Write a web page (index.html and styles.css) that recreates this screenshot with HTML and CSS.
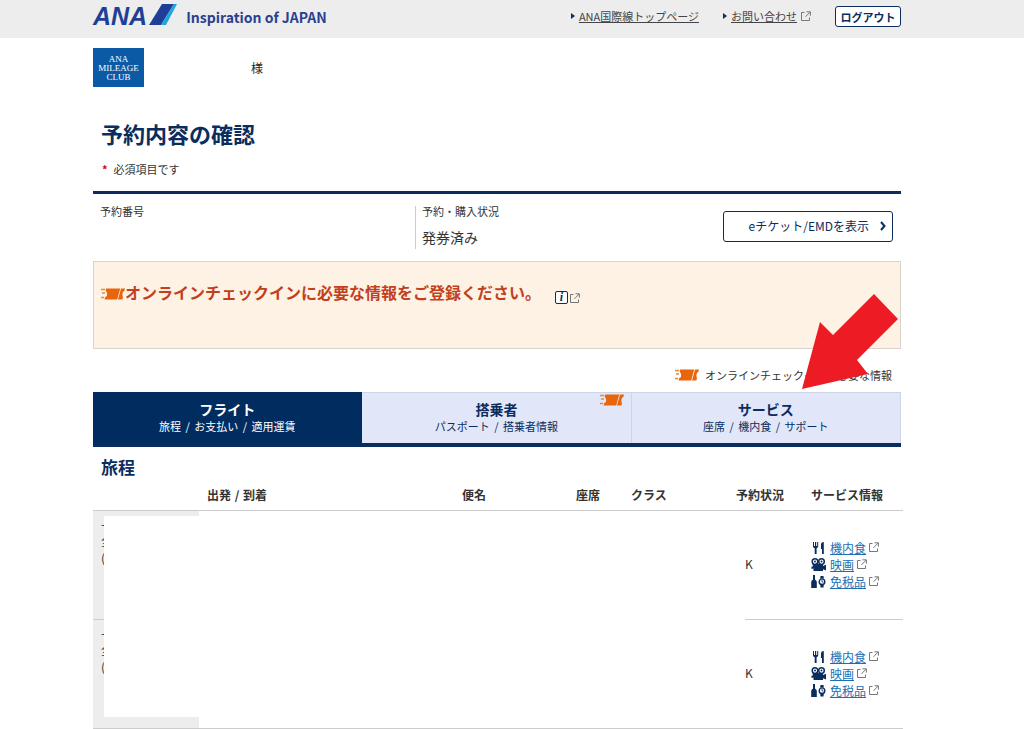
FILE: index.html
```
<!DOCTYPE html>
<html lang="ja">
<head>
<meta charset="utf-8">
<title>予約内容の確認</title>
<link rel="stylesheet" href="styles.css">
</head>
<body>
<svg class="defs" aria-hidden="true">
  <symbol id="ext" viewBox="0 0 10 10">
    <path d="M3.500 1.500H.5v8h8V6.500M5.500 .8h3.900v3.900M9.200 1L4.500 5.800" fill="none" stroke="#777" stroke-width="1"/>
  </symbol>
  <symbol id="ticket" viewBox="0 0 24 12">
    <path d="M0 1.500h4M1 5h3M0 9.500h3" stroke="#e9883c" stroke-width="1.300" fill="none"/>
    <path d="M5 .5H19.200L16.200 11.500H3.500L4.200 9Q6.300 8.800 6.200 6.200Q6 4 4.700 3ZM20 .5H24L23.300 3Q21.600 3.600 21.400 6Q21.300 8.300 22 9L21.400 11.500H17Z" fill="#e8650c"/>
  </symbol>
  <symbol id="meal" viewBox="0 0 15 13">
    <path d="M2 1h1v4h1V1h1.200v4h1V1h1v4.500Q7 6.800 5.600 7.200V13H3.700V7.200Q2 6.800 2 5.500ZM10 8V3Q10.300 1 12.800 1V13H11V8Z" fill="#0b2d5e"/>
  </symbol>
  <symbol id="movie" viewBox="0 0 15 13">
    <path d="M1.500 6H12v2L15 6.800v5.700L12 11.300V13H2.500V10.500L.5 11V8.500H2Z" fill="#0b2d5e"/>
    <circle cx="4" cy="3.600" r="2.800" fill="#fff" stroke="#0b2d5e" stroke-width="1.500"/>
    <circle cx="10.500" cy="3.600" r="2.800" fill="#fff" stroke="#0b2d5e" stroke-width="1.500"/>
    <circle cx="4" cy="3.600" r="1" fill="#0b2d5e"/>
    <circle cx="10.500" cy="3.600" r="1" fill="#0b2d5e"/>
  </symbol>
  <symbol id="duty" viewBox="0 0 15 13">
    <path d="M2 0H4V4.500Q5.800 5.500 5.800 7V13H.2V7Q.2 5.500 2 4.500ZM9.500 1h3l.3 2.500h-3.600ZM9.500 12.500h3l.3-3h-3.600Z" fill="#0b2d5e"/>
    <circle cx="11" cy="6.700" r="2.800" fill="#fff" stroke="#0b2d5e" stroke-width="1.400"/>
    <path d="M11 5v2h1.400" fill="none" stroke="#0b2d5e" stroke-width=".8"/>
  </symbol>
</svg>

<header class="site-header">
  <div class="wrap header-row">
    <a class="brand" href="#">
      <span class="brand-name">ANA</span>
      <svg class="brand-mark" viewBox="0 0 28 21" aria-hidden="true">
        <path d="M13 0H25L12 21H0Z" fill="#1f3f96"/>
        <path d="M25 0H28L17 21H12Z" fill="#1fa5e0"/>
      </svg>
      <span class="brand-tag">Inspiration of JAPAN</span>
    </a>
    <nav class="header-nav">
      <span class="nav-item"><a href="#">ANA国際線トップページ</a></span>
      <span class="nav-item"><a href="#">お問い合わせ</a><svg class="ext"><use href="#ext"/></svg></span>
      <button class="logout" type="button">ログアウト</button>
    </nav>
  </div>
</header>

<main class="wrap">
  <div class="member">
    <div class="club">ANA<br>MILEAGE<br>CLUB</div>
    <span class="honorific">様</span>
  </div>

  <h1>予約内容の確認</h1>
  <p class="required"><span class="star">*</span>必須項目です</p>

  <section class="summary">
    <div class="summary-cell">
      <span class="label">予約番号</span>
    </div>
    <div class="summary-cell status">
      <span class="label">予約・購入状況</span>
      <span class="value">発券済み</span>
    </div>
    <button class="eticket" type="button">eチケット/EMDを表示
      <svg class="chevron" viewBox="0 0 6 10" aria-hidden="true"><path d="M1 1l3.500 4L1 9" fill="none" stroke="#0b2d5e" stroke-width="2"/></svg>
    </button>
  </section>

  <section class="notice">
    <svg class="ticket"><use href="#ticket"/></svg>
    <strong>オンラインチェックインに必要な情報をご登録ください。</strong>
    <a class="info" href="#" aria-label="詳細"><span class="info-mark">i</span><svg class="ext"><use href="#ext"/></svg></a>
  </section>

  <div class="legend">
    <svg class="ticket"><use href="#ticket"/></svg>
    <span>オンラインチェックインに必要な情報</span>
    <svg class="arrow" viewBox="0 0 97 96" aria-hidden="true"><path d="M0 95L18 28L31 41L72 0L96 25L55 66L66 80Z" fill="#ed1c24"/></svg>
  </div>

  <nav class="tabs">
    <button class="tab active" type="button"><b>フライト</b><span>旅程 <i>/</i> お支払い <i>/</i> 適用運賃</span></button>
    <button class="tab" type="button"><b>搭乗者</b><span>パスポート <i>/</i> 搭乗者情報</span><svg class="ticket"><use href="#ticket"/></svg></button>
    <button class="tab" type="button"><b>サービス</b><span>座席 <i>/</i> 機内食 <i>/</i> サポート</span></button>
  </nav>

  <h2>旅程</h2>
  <div class="itinerary">
    <table>
      <colgroup><col class="c-date"><col class="c-route"><col class="c-flight"><col class="c-seat"><col class="c-class"><col class="c-state"><col></colgroup>
      <thead>
        <tr><th></th><th>出発 <i>/</i> 到着</th><th>便名</th><th>座席</th><th>クラス</th><th>予約状況</th><th>サービス情報</th></tr>
      </thead>
      <tbody>
        <tr>
          <td class="date">-<br>全<br>(</td><td></td><td></td><td></td><td></td><td class="state">K</td>
          <td>
            <ul class="services">
              <li><svg class="pic"><use href="#meal"/></svg><a href="#">機内食</a><svg class="ext"><use href="#ext"/></svg></li>
              <li><svg class="pic"><use href="#movie"/></svg><a href="#">映画</a><svg class="ext"><use href="#ext"/></svg></li>
              <li><svg class="pic"><use href="#duty"/></svg><a href="#">免税品</a><svg class="ext"><use href="#ext"/></svg></li>
            </ul>
          </td>
        </tr>
        <tr>
          <td class="date">-<br>全<br>(</td><td></td><td></td><td></td><td></td><td class="state">K</td>
          <td>
            <ul class="services">
              <li><svg class="pic"><use href="#meal"/></svg><a href="#">機内食</a><svg class="ext"><use href="#ext"/></svg></li>
              <li><svg class="pic"><use href="#movie"/></svg><a href="#">映画</a><svg class="ext"><use href="#ext"/></svg></li>
              <li><svg class="pic"><use href="#duty"/></svg><a href="#">免税品</a><svg class="ext"><use href="#ext"/></svg></li>
            </ul>
          </td>
        </tr>
      </tbody>
    </table>
    <div class="mask"></div>
  </div>
</main>
</body>
</html>
```
FILE: styles.css
```
* { box-sizing: border-box; }
body {
  margin: 0;
  background: #fff;
  color: #333;
  font: 12px/18px "Noto Sans CJK JP", sans-serif;
}
button { font: inherit; cursor: pointer; }
h1, h2, p, ul { margin: 0; padding: 0; }
i { margin: 0 2px; font-style: normal; }
.defs { display: none; }
.wrap { margin: 0 123px 0 93px; }
.ext { width: 10px; height: 10px; flex: none; }
.ticket { width: 24px; height: 12px; flex: none; }

.site-header { background: #ededed; }
.header-row { display: flex; justify-content: space-between; height: 38px; }
.brand { display: flex; align-items: flex-start; padding-top: 4px; color: #2b3f8f; text-decoration: none; }
.brand-name { font: italic bold 25px/25px "Liberation Sans", Arial, sans-serif; color: #1f3f96; }
.brand-mark { width: 28px; height: 21px; margin-left: 2px; }
.brand-tag { margin-left: 9px; font-size: 14px; line-height: 26px; font-weight: bold; }
.header-nav { display: flex; align-items: flex-start; gap: 24px; padding-top: 6px; font-size: 11px; line-height: 20px; }
.nav-item { display: flex; align-items: center; }
.nav-item::before { content: ""; border: 3px solid transparent; border-left: 4px solid #0b2d5e; border-right: 0; margin-right: 4px; }
.nav-item a { color: #444; }
.nav-item .ext { margin-left: 4px; }
.logout { width: 66px; height: 21px; padding: 0; border: 1px solid #0b2d5e; border-radius: 3px; background: #fff; color: #0b2d5e; font-weight: bold; line-height: 18px; }

.member { display: flex; align-items: center; gap: 107px; padding-top: 10px; }
.club { width: 51px; height: 39px; padding-top: 7px; background: #0b5aa6; color: #fff; font: 9px/9px "Liberation Serif", serif; text-align: center; }
.honorific { color: #222; }

h1 { margin-top: 30px; padding-left: 8px; color: #0b2d5e; font-size: 22px; line-height: 32px; }
.required { padding: 11px 0 13px 9px; font-size: 11px; }
.star { margin-right: 6px; color: #d0021b; font-weight: bold; }

.summary { display: flex; align-items: flex-start; padding: 12px 8px 12px 0; border-top: 3px solid #0b2d5e; }
.summary-cell { display: flex; flex: 1; flex-direction: column; height: 43px; padding-left: 7px; }
.summary-cell:first-child { flex: 0 0 322px; }
.status { padding-left: 6px; border-left: 1px solid #ccc; }
.label { font-size: 11px; line-height: 11px; }
.value { margin-top: 12px; font-size: 14px; line-height: 17px; }
.eticket { display: flex; align-items: center; justify-content: flex-end; gap: 11px; width: 170px; height: 31px; margin-top: 5px; padding: 0 6px 2px 0; border: 1px solid #0b2d5e; border-radius: 3px; background: #fff; color: #0b2d5e; }
.chevron { width: 6px; height: 10px; }

.notice { display: flex; align-items: flex-start; height: 88px; padding: 18px 7px; border: 1px solid #d8d3cb; background: #fef2e4; }
.notice strong { color: #c2401c; font-size: 16px; line-height: 24px; }
.notice .ticket { margin-top: 8px; }
.info { display: flex; align-items: center; gap: 2px; margin: 11px 0 0 14px; text-decoration: none; }
.info-mark { width: 13px; height: 13px; border: 1px solid #0b2d5e; border-radius: 2px; background: #fff; color: #0b2d5e; font: italic bold 12px/11px "Liberation Serif", serif; text-align: center; }

.legend { position: relative; display: flex; align-items: center; justify-content: flex-end; gap: 6px; padding: 17px 9px 8px; font-size: 11px; }
.arrow { position: absolute; right: 2px; bottom: 2px; width: 97px; height: 96px; z-index: 1; }

.tabs { display: flex; border-bottom: 4px solid #0b2d5e; }
.tab { position: relative; display: flex; flex: 1; flex-direction: column; align-items: center; height: 51px; padding: 7px 0 0; border: 1px solid #cdd4e6; border-width: 1px 1px 0 0; background: #e1e7f8; color: #0b2d5e; font-size: 11px; line-height: 16px; }
.tab b { font-size: 14px; line-height: 18px; }
.tab.active { background: #002c60; border-color: #002c60; color: #fff; }
.tab .ticket { position: absolute; top: 1px; right: 7px; }

h2 { padding: 8px 8px 5px; color: #0b2d5e; font-size: 17px; line-height: 24px; }
.itinerary { position: relative; margin-right: -2px; }
table { width: 100%; border-collapse: collapse; table-layout: fixed; }
.c-date { width: 106px; }
.c-route { width: 255px; }
.c-flight { width: 114px; }
.c-seat { width: 55px; }
.c-class { width: 105px; }
.c-state { width: 75px; }
th { height: 26px; padding: 0 0 4px 8px; border-bottom: 1px solid #ccc; text-align: left; line-height: 18px; white-space: nowrap; }
th i { margin: 0 1px; }
td { height: 109px; padding: 0 0 1px 8px; border-bottom: 1px solid #ccc; }
td.date { padding-top: 4px; background: #ededed; line-height: 17px; vertical-align: top; }
td.state { padding-left: 8px; }
.services { list-style: none; line-height: 17px; }
.services li { display: flex; align-items: center; }
.services a { margin: 0 3px 0 4px; color: #1a6fb5; }
.pic { width: 15px; height: 13px; }
.mask { position: absolute; top: 32px; right: 158px; bottom: 12px; left: 11px; background: #fff; }
td.state { padding-left: 17px; }
```
